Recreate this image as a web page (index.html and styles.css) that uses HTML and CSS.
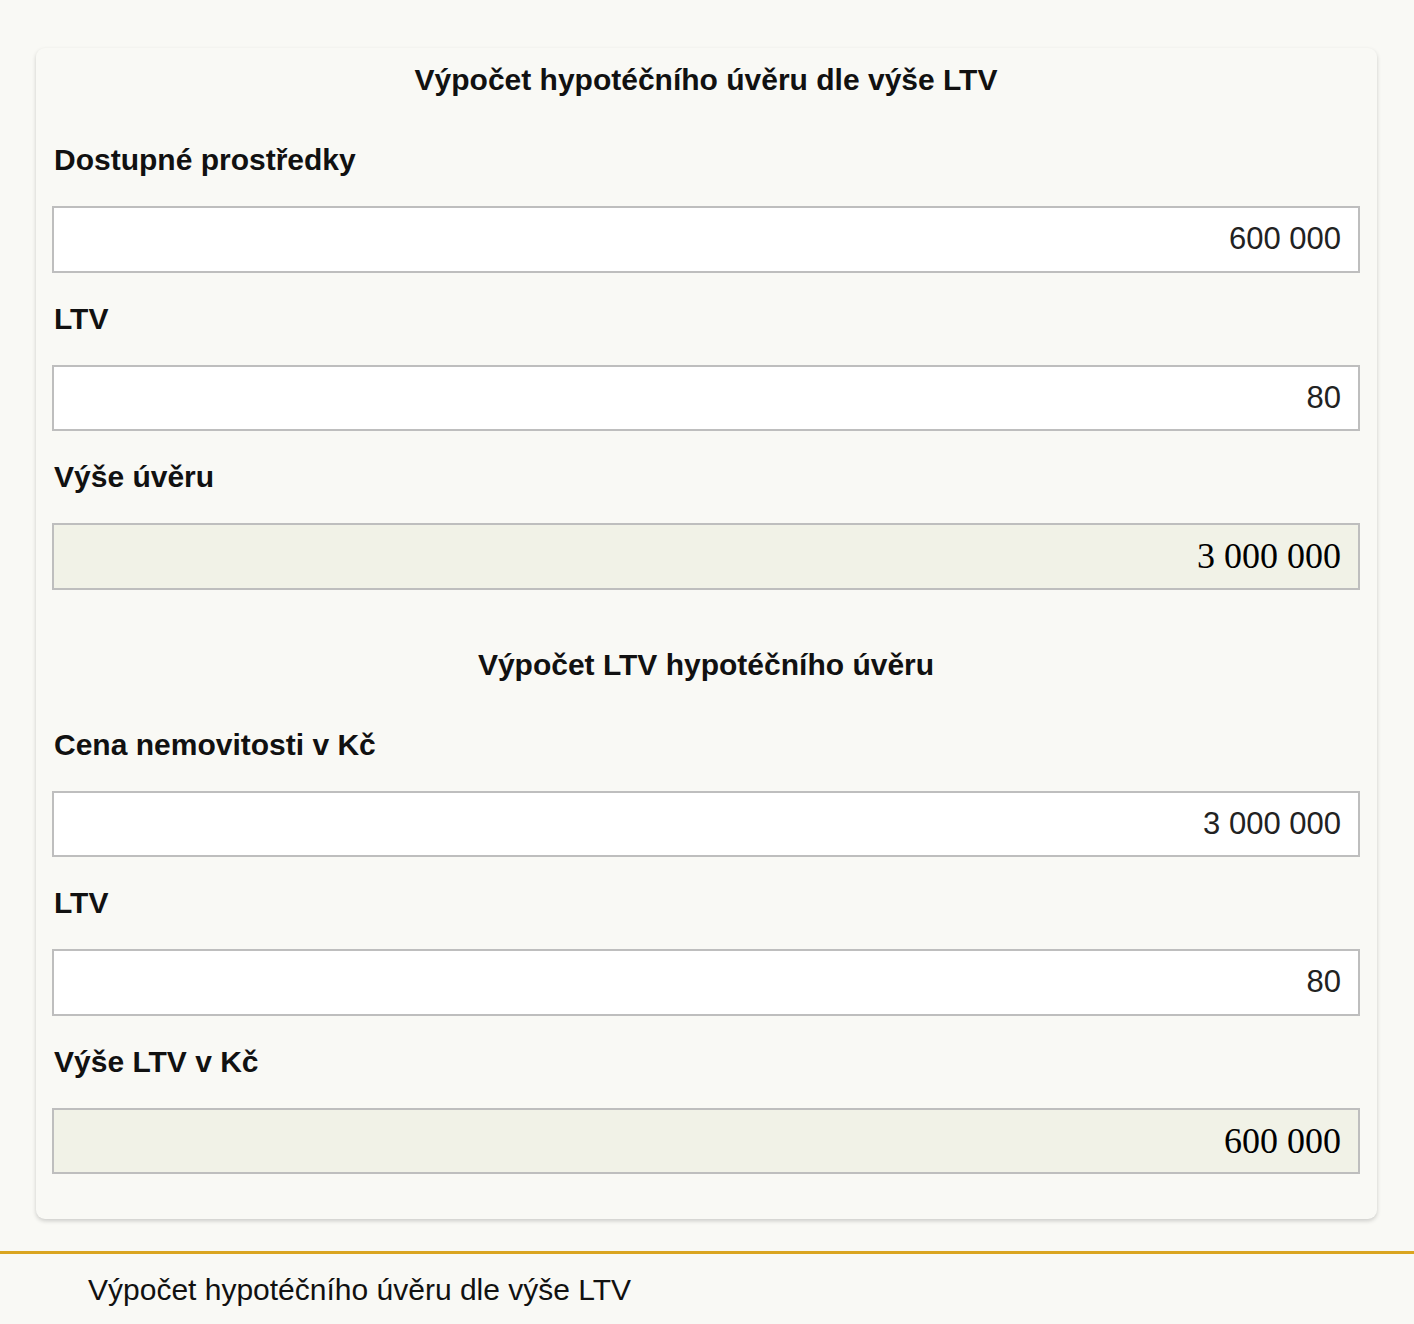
FILE: index.html
```html
<!DOCTYPE html>
<html lang="cs">
<head>
<meta charset="utf-8">
<title>Výpočet hypotéčního úvěru dle výše LTV</title>
<link rel="stylesheet" href="styles.css">
</head>
<body>
<main class="page">
  <section class="card">
    <h2 class="card-title">Výpočet hypotéčního úvěru dle výše LTV</h2>
    <label class="field-label" for="f1">Dostupné prostředky</label>
    <input class="field" id="f1" type="text" value="600 000">
    <label class="field-label" for="f2">LTV</label>
    <input class="field" id="f2" type="text" value="80">
    <label class="field-label" for="f3">Výše úvěru</label>
    <div class="field field-result" id="f3">3 000 000</div>

    <h2 class="card-title card-title-second">Výpočet LTV hypotéčního úvěru</h2>
    <label class="field-label" for="f4">Cena nemovitosti v Kč</label>
    <input class="field" id="f4" type="text" value="3 000 000">
    <label class="field-label" for="f5">LTV</label>
    <input class="field" id="f5" type="text" value="80">
    <label class="field-label" for="f6">Výše LTV v Kč</label>
    <div class="field field-result" id="f6">600 000</div>
  </section>
</main>
<footer class="footer">
  <p class="footer-text">Výpočet hypotéčního úvěru dle výše LTV</p>
</footer>
</body>
</html>
```

FILE: styles.css
```css
html, body {
  margin: 0;
  padding: 0;
  background: #f9f9f5;
  font-family: "Liberation Sans", Arial, sans-serif;
  color: #111;
}

.page {
  padding: 48px 37px 32px 36px;
}

.card {
  display: flex;
  flex-direction: column;
  background: #f9f9f5;
  border-radius: 9px;
  box-shadow: 0 2px 4px rgba(0, 0, 0, 0.18);
  padding: 15px 17px 44.5px 16px;
}

.card-title {
  margin: 0 0 17px;
  font-size: 30px;
  line-height: 34px;
  font-weight: bold;
  text-align: center;
  color: #111;
}

.card-title-second {
  margin-top: 58px;
}

.field-label {
  display: block;
  padding: 29px 0 29px 2px;
  font-size: 30px;
  line-height: 34px;
  font-weight: bold;
  color: #111;
}

.field {
  display: block;
  box-sizing: border-box;
  width: 100%;
  height: 66.5px;
  margin: 0;
  padding: 0 17px;
  border: 2px solid #bebebe;
  border-radius: 0;
  background: #ffffff;
  font-family: "Liberation Sans", Arial, sans-serif;
  font-size: 31px;
  color: #222;
  text-align: right;
  outline: none;
}

.field-result {
  display: flex;
  align-items: center;
  justify-content: flex-end;
  background: #f1f2e7;
  font-family: "Liberation Serif", "Times New Roman", serif;
  font-size: 36px;
  color: #000;
}

.footer {
  border-top: 3px solid #daa520;
  padding: 19px 0 0 88px;
}

.footer-text {
  margin: 0;
  font-size: 30px;
  line-height: 34px;
  color: #111;
}
```
